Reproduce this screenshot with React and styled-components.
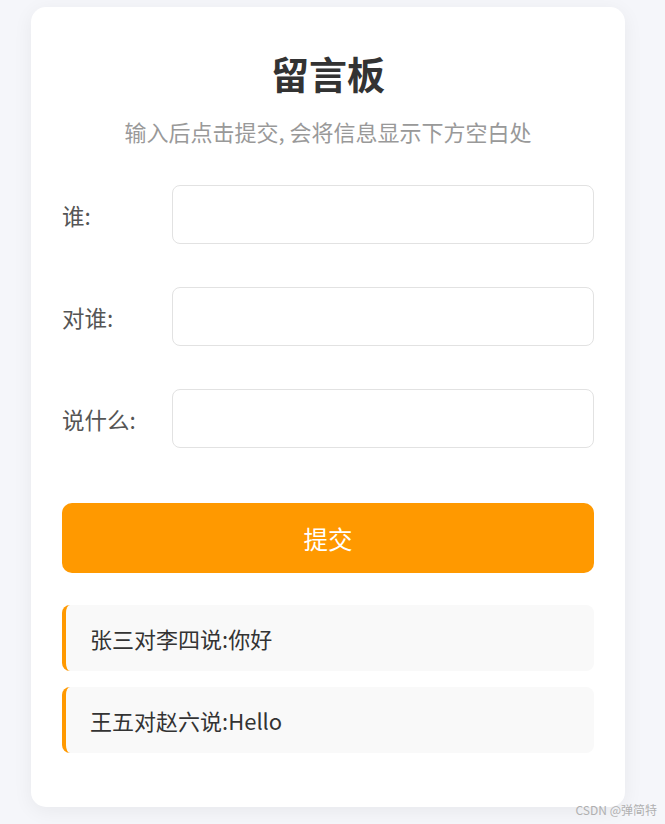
import { useState } from 'react';
import styled, { createGlobalStyle } from 'styled-components';

const GlobalStyle = createGlobalStyle`
	* {
		box-sizing: border-box;
	}
	body {
		margin: 0;
		background: #f5f6fa;
		font-family: 'Noto Sans CJK SC', 'Noto Sans', sans-serif;
	}
`;

const fields = [
	{ key: 'from', label: '谁:' },
	{ key: 'to', label: '对谁:' },
	{ key: 'say', label: '说什么:' },
];

const App = () => {
	const [form, setForm] = useState({ from: '', to: '', say: '' });
	const [messages, setMessages] = useState([
		{ from: '张三', to: '李四', say: '你好' },
		{ from: '王五', to: '赵六', say: 'Hello' },
	]);

	const submit = () => {
		if (!form.from || !form.to || !form.say) return;
		setMessages([...messages, form]);
		setForm({ from: '', to: '', say: '' });
	};

	return (
		<Page>
			<GlobalStyle />
			<Board>
				<Title>留言板</Title>
				<Subtitle>输入后点击提交, 会将信息显示下方空白处</Subtitle>
				<Form>
					{fields.map((f) => (
						<Row key={f.key}>
							<Label>{f.label}</Label>
							<Input
								value={form[f.key]}
								onChange={(e) => setForm({ ...form, [f.key]: e.target.value })}
							/>
						</Row>
					))}
				</Form>
				<SubmitButton onClick={submit}>提交</SubmitButton>
				<MessageList>
					{messages.map((m, i) => (
						<Message key={i}>
							{m.from}对{m.to}说:{m.say}
						</Message>
					))}
				</MessageList>
			</Board>
			<Watermark>CSDN @弹简特</Watermark>
		</Page>
	);
};

export default App;

const Page = styled.div`
	min-height: 824px;
	padding: 7px 0 17px 31px;
`;

const Board = styled.div`
	width: 594px;
	padding: 44px 31px 54px;
	background: #fff;
	border-radius: 15px;
	box-shadow: 0 4px 20px rgba(0, 0, 0, 0.06);
`;

const Title = styled.h1`
	margin: 0;
	font-size: 38px;
	line-height: 44px;
	font-weight: 700;
	color: #333;
	text-align: center;
`;

const Subtitle = styled.p`
	margin: 22px 0 0;
	font-size: 22px;
	line-height: 28px;
	color: #999;
	text-align: center;
`;

const Form = styled.div`
	display: flex;
	flex-direction: column;
	gap: 43px;
	margin-top: 40px;
`;

const Row = styled.div`
	display: flex;
	align-items: center;
`;

const Label = styled.label`
	width: 110px;
	flex-shrink: 0;
	font-size: 22.5px;
	color: #555;
`;

const Input = styled.input`
	flex: 1;
	height: 59px;
	padding: 0 14px;
	border: 1px solid #e2e2e2;
	border-radius: 8px;
	font-size: 20px;
	font-family: inherit;
	outline: none;

	&:focus {
		border-color: #ff9900;
	}
`;

const SubmitButton = styled.button`
	display: block;
	width: 100%;
	height: 70px;
	margin-top: 55px;
	border: none;
	border-radius: 10px;
	background: #ff9900;
	color: #fff;
	font-size: 24.5px;
	font-family: inherit;
	cursor: pointer;
`;

const MessageList = styled.div`
	display: flex;
	flex-direction: column;
	gap: 16px;
	margin-top: 32px;
`;

const Message = styled.div`
	height: 66px;
	display: flex;
	align-items: center;
	padding-left: 24px;
	background: #f9f9f9;
	border-left: 4px solid #ff9900;
	border-radius: 8px;
	font-size: 22px;
	color: #333;
`;

const Watermark = styled.div`
	position: absolute;
	right: 8px;
	top: 801px;
	font-size: 12px;
	color: #b0b0b0;
`;
